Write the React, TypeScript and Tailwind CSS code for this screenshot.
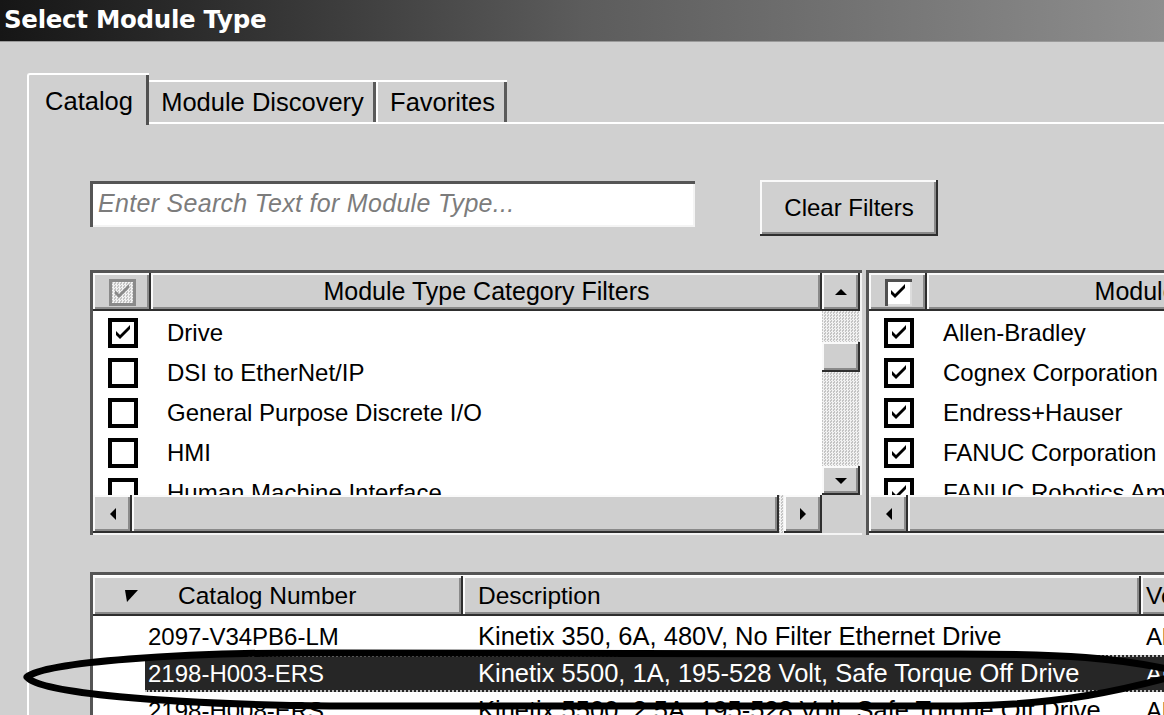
import React from 'react';

const FONT = "font-['Liberation_Sans',Arial,sans-serif]";
const RAISED = 'shadow-[inset_-2px_-2px_0_#2e2e2e,inset_2px_2px_0_#fafafa,inset_-4px_-4px_0_#8a8a8a]';
const SUNKEN = 'shadow-[inset_3px_3px_0_#555555,inset_-2px_-2px_0_#f4f4f4]';
const DITHER = 'bg-[repeating-conic-gradient(#f2f2f2_0%_25%,#c4c4c4_0%_50%)] bg-[length:3px_3px]';

function Check({ color = '#000' }: { color?: string }) {
  return (
    <svg width="18" height="16" viewBox="0 0 9 8">
      <path d="M1 3 L3 5 L8 0 L8 2 L3 7 L1 5 Z" fill={color} />
    </svg>
  );
}

function CheckBox({ checked }: { checked: boolean }) {
  return (
    <div className="w-[30px] h-[30px] border-[4px] border-black bg-white flex items-center justify-center shrink-0">
      {checked && <Check />}
    </div>
  );
}

function Arrow({ dir }: { dir: 'up' | 'down' | 'left' | 'right' }) {
  const pts = {
    up: '0,6 6,0 12,6',
    down: '0,0 12,0 6,6',
    left: '6,0 6,12 0,6',
    right: '0,0 0,12 6,6',
  }[dir];
  const vertical = dir === 'up' || dir === 'down';
  return (
    <svg width={vertical ? 12 : 6} height={vertical ? 6 : 12} viewBox={vertical ? '0 0 12 6' : '0 0 6 12'}>
      <polygon points={pts} fill="#000" />
    </svg>
  );
}

function ScrollBtn({ dir, className = '' }: { dir: 'up' | 'down' | 'left' | 'right'; className?: string }) {
  return (
    <div className={`bg-[#cfcfcf] flex items-center justify-center shrink-0 ${RAISED} ${className}`}>
      <Arrow dir={dir} />
    </div>
  );
}

function FilterList({
  title,
  items,
  width,
  headerBox,
  vscroll,
}: {
  title: string;
  items: { label: string; checked: boolean }[];
  width: string;
  headerBox: 'disabled' | 'checked';
  vscroll: boolean;
}) {
  return (
    <div className={`${width} h-[265px] shrink-0 bg-white flex flex-col pt-[3px] pl-[3px] pb-[2px] ${SUNKEN}`}>
      <div className="flex flex-1 min-h-0">
        <div className="flex-1 flex flex-col min-w-0">
          {/* header */}
          <div className="h-[38px] flex shrink-0">
            <div className={`w-[58px] bg-[#cfcfcf] flex items-center justify-center ${RAISED}`}>
              {headerBox === 'disabled' ? (
                <div className={`w-[27px] h-[27px] border-[3px] border-[#8a8a8a] flex items-center justify-center ${DITHER}`}>
                  <Check color="#8a8a8a" />
                </div>
              ) : (
                <div className="w-[27px] h-[27px] bg-white shadow-[inset_3px_3px_0_#505050,inset_-2px_-2px_0_#dcdcdc] flex items-center justify-center">
                  <Check />
                </div>
              )}
            </div>
            <div className={`flex-1 bg-[#cfcfcf] flex items-center justify-center text-[25px] text-black ${RAISED}`}>
              {title}
            </div>
          </div>
          {/* rows */}
          <div className="flex-1 overflow-hidden pt-[2px]">
            {items.map((it) => (
              <div key={it.label} className="h-[40px] flex items-center pl-[15px] gap-[29px] text-[24px] text-black whitespace-nowrap">
                <CheckBox checked={it.checked} />
                <span>{it.label}</span>
              </div>
            ))}
          </div>
        </div>
        {vscroll && (
          <div className="w-[38px] flex flex-col mr-[2px]">
            <ScrollBtn dir="up" className="h-[38px]" />
            <div className={`h-[31px] ${DITHER}`} />
            <div className={`h-[30px] bg-[#cfcfcf] ${RAISED}`} />
            <div className={`flex-1 ${DITHER}`} />
            <ScrollBtn dir="down" className="h-[29px]" />
          </div>
        )}
      </div>
      {/* horizontal scrollbar */}
      <div className="h-[38px] flex shrink-0 bg-[#cfcfcf]">
        <ScrollBtn dir="left" className="w-[39px]" />
        <div className={`flex-1 bg-[#cfcfcf] ${RAISED}`} />
        {vscroll && (
          <>
            <div className={`w-[5px] ${DITHER}`} />
            <ScrollBtn dir="right" className="w-[38px]" />
            <div className="w-[40px] bg-[#cfcfcf]" />
          </>
        )}
      </div>
    </div>
  );
}

const categories = [
  { label: 'Drive', checked: true },
  { label: 'DSI to EtherNet/IP', checked: false },
  { label: 'General Purpose Discrete I/O', checked: false },
  { label: 'HMI', checked: false },
  { label: 'Human Machine Interface', checked: false },
];

const vendors = [
  { label: 'Allen-Bradley', checked: true },
  { label: 'Cognex Corporation', checked: true },
  { label: 'Endress+Hauser', checked: true },
  { label: 'FANUC Corporation', checked: true },
  { label: 'FANUC Robotics America', checked: true },
];

const modules = [
  { cat: '2097-V34PB6-LM', desc: 'Kinetix 350, 6A, 480V, No Filter Ethernet Drive', vendor: 'Allen-Bradley' },
  { cat: '2198-H003-ERS', desc: 'Kinetix 5500, 1A, 195-528 Volt, Safe Torque Off Drive', vendor: 'Allen-Bradley' },
  { cat: '2198-H008-ERS', desc: 'Kinetix 5500, 2.5A, 195-528 Volt, Safe Torque Off Drive', vendor: 'Allen-Bradley' },
];

export default function App() {
  return (
    <div className={`relative w-[1164px] h-[715px] overflow-hidden bg-[#d0d0d0] ${FONT}`}>
      {/* Title bar */}
      <div className="h-[42px] flex items-center pl-[4px] bg-gradient-to-r from-[#161616] via-[#5c5c5c] to-[#8e8e8e] border-b border-[#9a9a9a]">
        <span className="text-[24.5px] font-bold text-white font-['DejaVu_Sans',Verdana,sans-serif] tracking-[-0.3px]">
          Select Module Type
        </span>
      </div>

      {/* Tabs */}
      <div className="flex items-end pl-[27px] mt-[31px] h-[49px] text-[25.5px]">
        <div className="relative z-10 -mb-[3px] h-[52px] w-[122px] bg-[#d0d0d0] border-l-2 border-t-2 border-white rounded-tl-[3px] shadow-[inset_-3px_0_0_#505050] flex items-center justify-center pt-[2px]">
          Catalog
        </div>
        <div className="h-[42px] w-[227px] bg-[#d0d0d0] border-t-2 border-white shadow-[inset_-3px_0_0_#5a5a5a] flex items-center justify-center">
          Module Discovery
        </div>
        <div className="h-[42px] w-[131px] bg-[#d0d0d0] border-l-2 border-t-2 border-white shadow-[inset_-3px_0_0_#5a5a5a] flex items-center justify-center">
          Favorites
        </div>
      </div>

      {/* Tab panel */}
      <div className="ml-[27px] border-l-2 border-t-2 border-white pl-[61px] pt-[56px] h-[600px]">
        {/* search row */}
        <div className="flex items-start gap-[65px] h-[56px]">
          <div className={`mt-[1px] w-[605px] h-[46px] bg-white flex items-center pl-[8px] text-[25px] tracking-[0.3px] italic text-[#7c7c7c] ${SUNKEN}`}>
            Enter Search Text for Module Type...
          </div>
          <div className={`w-[178px] h-[56px] bg-[#d0d0d0] flex items-center justify-center text-[24px] text-black ${RAISED}`}>
            Clear Filters
          </div>
        </div>

        {/* filter lists */}
        <div className="flex gap-[4px] mt-[34px]">
          <FilterList title="Module Type Category Filters" items={categories} width="w-[772px]" headerBox="disabled" vscroll />
          <FilterList title="Module Type Vendor Filters" items={vendors} width="w-[700px]" headerBox="checked" vscroll={false} />
        </div>

        {/* module table */}
        <div className={`mt-[37px] w-[1200px] h-[180px] bg-white pt-[4px] pl-[3px] ${SUNKEN}`}>
          <div className="h-[40px] flex text-[24.5px] text-black">
            <div className={`w-[370px] bg-[#cfcfcf] flex items-center pl-[32px] ${RAISED}`}>
              <svg width="13" height="12" viewBox="0 0 13 12" className="mr-[40px]">
                <polygon points="0,0 13,0 2,12" fill="#000" />
              </svg>
              Catalog Number
            </div>
            <div className={`w-[678px] bg-[#cfcfcf] flex items-center pl-[15px] ${RAISED}`}>Description</div>
            <div className={`flex-1 bg-[#cfcfcf] flex items-center pl-[5px] ${RAISED}`}>Vendor</div>
          </div>
          <div className="pt-[2px]">
            {modules.map((m, i) => {
              const sel = i === 1;
              return (
                <div key={m.cat} className="h-[37px] flex whitespace-nowrap">
                  <div className="w-[52px] shrink-0" />
                  <div
                    className={`flex flex-1 items-center ${
                      sel ? 'bg-[#262626] text-white border-y-2 border-dotted border-[#bdbdbd]' : 'text-black'
                    }`}
                  >
                    <div className="w-[318px] pl-[3px] shrink-0 text-[24px]">{m.cat}</div>
                    <div className="w-[678px] pl-[15px] shrink-0 text-[25.5px]">{m.desc}</div>
                    <div className="pl-[5px] text-[24px]">{m.vendor}</div>
                  </div>
                </div>
              );
            })}
          </div>
        </div>
      </div>

      {/* hand-drawn highlight around the selected row */}
      <svg className="absolute left-0 top-0 pointer-events-none" width="1164" height="715" viewBox="0 0 1164 715">
        <path
          d="M1185 673 C1120 657 1060 654 960 654 L330 653 C180 652 45 662 27 677 C40 693 160 704 330 706 L960 706 C1060 705 1125 690 1185 673 Z"
          fill="none"
          stroke="#000"
          strokeWidth="7"
          strokeLinejoin="round"
        />
      </svg>
    </div>
  );
}
